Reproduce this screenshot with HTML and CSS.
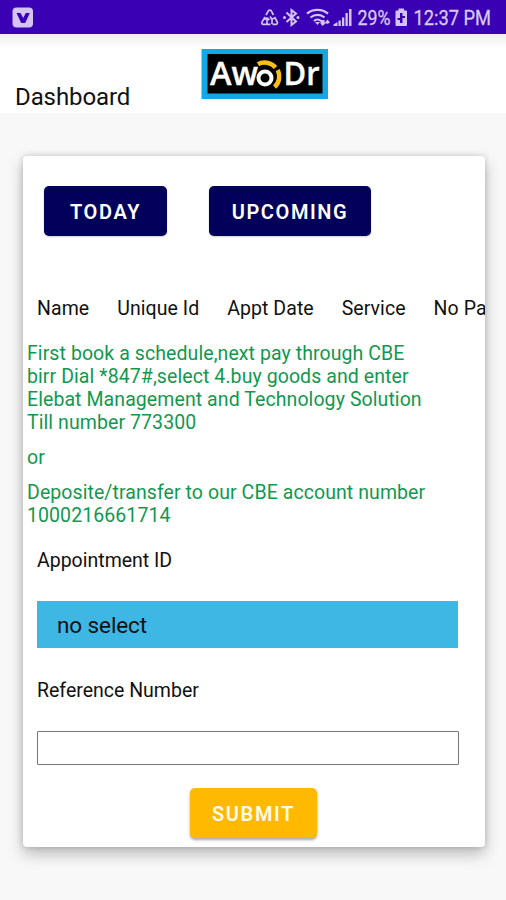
FILE: index.html
```html
<!DOCTYPE html>
<html lang="en">
<head>
<meta charset="utf-8">
<title>Dashboard</title>
<link rel="stylesheet" href="styles.css">
</head>
<body>
<header class="status">
  <svg class="app-icon" width="22" height="22" viewBox="0 0 22 22"><rect x=".5" y=".5" width="20.5" height="20" rx="4" fill="#d4c4f2"/><path d="M4.500 6h4l2.700 5 2.600-5h4l-4.600 10h-4z" fill="#3a00b3"/></svg>
  <svg class="tray" width="238" height="34" viewBox="0 0 238 34">
    <g fill="none" stroke="#d4c4f2" stroke-width="1.7">
      <path stroke-linejoin="round" d="M7 15l2.500-4.300q1.300-1.400 2.600 0L14.500 15M15.500 17l2.800 5q.6 2-1.300 2.300h-3.500M11.500 24.300H4q-1.600-.3-1-2.200L6 17M8 24v-6l-2.500 1.500M8 18l2.500 2M13 24v-4.500l-2-3M13 19l3-1"/>
      <path stroke-width="2" d="M27.500 12.500l9.500 9-4.500 3.500V10l4.500 3.500-9.500 8.500"/>
      <path stroke-width="2.2" d="M48 13.700c6-5 15-5 21 0M51.500 17.500c4-3.500 10-3.500 14 0M55 21c2-2 5-2 7 0"/>
    </g>
    <g fill="#d4c4f2">
      <path d="M56 22h5l-2.500 3zM61.500 20h4v2.500h2L63.500 26l-2-2.500zM66 22.500l2.500-3 2.500 3-2.500 1.500z"/>
      <circle cx="25.500" cy="17.500" r="1.500"/><circle cx="39" cy="17.500" r="1.500"/>
      <path d="M74.500 26v-1.500l4-2.500v4zM79.500 26v-5.500h2.300V26zM83 26v-8.500h2.300V26zM86.500 26V13h2.300v13zM90 26V9h2.500v17z"/>
      <path d="M136.500 11.500q0-1 1-1h2V8.500h5.500v2h2q1 0 1 1V25q0 1-1 1h-9.500q-1 0-1-1z"/>
    </g>
    <path d="M141 13h2.500v3h2.500v2h-2.500v5H141v-3h-2.500v-2h2.500z" fill="#3a00b3"/>
    <text class="tray-text" x="98.500" y="25" textLength="33" lengthAdjust="spacingAndGlyphs">29%</text>
    <text class="tray-text" x="154.500" y="25" textLength="77.500" lengthAdjust="spacingAndGlyphs">12:37 PM</text>
  </svg>
</header>
<div class="appbar">
  <h1 class="title">Dashboard</h1>
  <svg class="logo" width="128" height="52" viewBox="0 0 128 52">
    <rect x=".5" y="1" width="126.500" height="50" fill="#12a8e6"/>
    <rect x="6.500" y="6" width="115" height="39.500" fill="#000"/>
    <text class="logo-text" x="9" y="37" textLength="48" lengthAdjust="spacingAndGlyphs">Aw</text>
    <text class="logo-text" x="82.500" y="37" textLength="36" lengthAdjust="spacingAndGlyphs">Dr</text>
    <circle cx="64" cy="30" r="6.500" fill="none" stroke="#fff" stroke-width="4"/>
    <g fill="none" stroke="#fbbe18" stroke-width="4.500"><path d="M57 16.200c5-3 13-2.200 17.500 3.300M76.800 22c2.800 6 1.500 13-3.300 17"/></g>
  </svg>
</div>
<main class="card">
  <div class="tabs">
    <button class="btn today">TODAY</button>
    <button class="btn upcoming">UPCOMING</button>
  </div>
  <div class="columns"><span>Name</span><span>Unique Id</span><span>Appt Date</span><span>Service</span><span>No Patient</span></div>
  <div class="notes">
    <p>First book a schedule,next pay through CBE<br>birr Dial *847#,select 4.buy goods and enter<br>Elebat Management and Technology Solution<br>Till number 773300</p>
    <p>or</p>
    <p>Deposite/transfer to our CBE account number<br>1000216661714</p>
  </div>
  <label class="label appointment">Appointment ID</label>
  <div class="select">no select</div>
  <label class="label" for="reference">Reference Number</label>
  <input class="field" id="reference">
  <button class="btn submit">SUBMIT</button>
</main>
</body>
</html>
```
FILE: styles.css
```css
* { box-sizing: border-box; }
body { margin: 0; height: 900px; overflow: hidden; background: #f8f8f8; color: #111; font-family: Roboto, sans-serif; }
.status { height: 34px; display: flex; justify-content: space-between; background: #3a00b3; }
.app-icon { margin: 7px 0 0 12px; }
.tray { margin-right: 9px; }
.tray-text { font-size: 20.5px; fill: #d8c9f5; stroke: #d8c9f5; stroke-width: .3px; }
.appbar { height: 79px; display: flex; padding-left: 15px; background: linear-gradient(#eeeef1, #fff 14px); }
.title { width: 186px; margin: 49px 0 0; font-size: 24px; line-height: 28px; font-weight: 400; letter-spacing: -.1px; }
.logo { margin-top: 14px; }
.logo-text { font: 600 33px "Open Sans", sans-serif; fill: #fff; stroke: #fff; stroke-width: .4px; }
.card { width: 462px; height: 691px; margin: 43px 0 0 23px; padding-top: 30px; display: flex; flex-direction: column; background: #fff; border-radius: 4px; box-shadow: 0 7px 15px rgba(0,0,0,.25), 0 0 6px rgba(0,0,0,.16); }
.tabs { display: flex; gap: 42px; margin-left: 21px; }
.btn { height: 50px; padding: 2px 0 0; border: 0; border-radius: 5px; background: #02005a; color: #fff; font: 600 20px Roboto, sans-serif; letter-spacing: 1.6px; box-shadow: 0 1px 2px rgba(0,0,0,.2); }
.today { width: 123px; }
.upcoming { width: 162px; }
.columns { display: flex; gap: 28px; margin: 61px 0 0; padding-left: 14px; overflow: hidden; white-space: nowrap; font-size: 19.500px; line-height: 24px; letter-spacing: .06px; }
.notes { margin: 21px 0 0 4px; color: #119850; font-size: 19.500px; line-height: 23px; letter-spacing: .08px; }
.notes p { margin: 0 0 12px; }
.label { margin-left: 14px; font-size: 19.500px; line-height: 24px; }
.appointment { margin-top: 10px; }
.select { width: 421px; height: 47px; margin: 28px 0 31px 14px; padding-left: 20px; background: #3eb7e5; font-size: 22.500px; line-height: 48px; letter-spacing: -.1px; }
.field { width: 422px; height: 34px; margin: 28px 0 23px 14px; border: 1px solid #777; border-radius: 1px; background: #fff; }
.submit { width: 127px; margin-left: 167px; background: #ffb900; color: #fffbe8; box-shadow: 0 2px 3px rgba(0,0,0,.35); }
```
